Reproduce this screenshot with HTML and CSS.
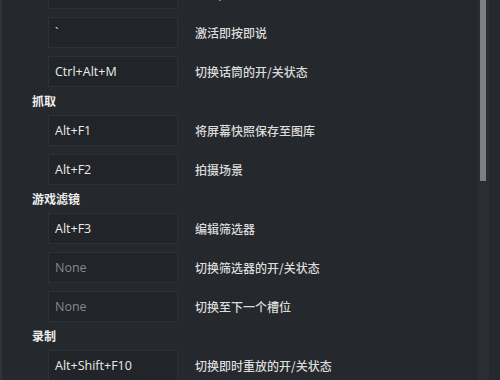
FILE: index.html
```html
<!DOCTYPE html>
<html>
<head>
<meta charset="utf-8">
<link rel="stylesheet" href="styles.css">
</head>
<body>
<div class="frame">
  <div class="content">
    <div class="list">
      <div class="row"><div class="key">Alt+Z</div><div class="desc">打开/关闭游戏内覆盖</div></div>
      <div class="row"><div class="key">`</div><div class="desc">激活即按即说</div></div>
      <div class="row"><div class="key">Ctrl+Alt+M</div><div class="desc">切换话筒的开/关状态</div></div>
      <div class="section">抓取</div>
      <div class="row"><div class="key">Alt+F1</div><div class="desc">将屏幕快照保存至图库</div></div>
      <div class="row"><div class="key">Alt+F2</div><div class="desc">拍摄场景</div></div>
      <div class="section">游戏滤镜</div>
      <div class="row"><div class="key">Alt+F3</div><div class="desc">编辑筛选器</div></div>
      <div class="row"><div class="key none">None</div><div class="desc">切换筛选器的开/关状态</div></div>
      <div class="row"><div class="key none">None</div><div class="desc">切换至下一个槽位</div></div>
      <div class="section">录制</div>
      <div class="row"><div class="key">Alt+Shift+F10</div><div class="desc">切换即时重放的开/关状态</div></div>
      <div class="row"><div class="key">Alt+F10</div><div class="desc">保存最后 5 分钟的录制内容</div></div>
    </div>
  </div>
  <div class="scrollbar"><div class="thumb"></div></div>
</div>
</body>
</html>
```
FILE: styles.css
```css
html, body {
  margin: 0;
  padding: 0;
  width: 500px;
  height: 380px;
  overflow: hidden;
  background: #25292d;
}
.frame {
  display: flex;
  height: 380px;
  border-left: 2px solid #303438;
  box-sizing: border-box;
}
.content {
  flex: 1;
  overflow: hidden;
}
.list {
  display: flex;
  flex-direction: column;
  gap: 8px;
  margin-top: -22px;
  padding-left: 46px;
}
.row {
  display: flex;
  align-items: center;
  height: 31px;
}
.key {
  box-sizing: border-box;
  width: 130px;
  height: 31px;
  display: flex;
  align-items: center;
  padding-left: 6px;
  background: #212428;
  border: 1px solid #2d3135;
  color: #ececec;
  font-family: "Open Sans", "Noto Sans", sans-serif;
  font-size: 12.5px;
}
.key.none {
  color: #85898c;
}
.desc {
  margin-left: 17px;
  color: #dcdcdc;
  font-family: "Noto Sans CJK SC", sans-serif;
  font-size: 12px;
  font-weight: 500;
}
.section {
  height: 12px;
  line-height: 12px;
  margin-left: -16px;
  color: #eeeeee;
  font-family: "Noto Sans CJK SC", sans-serif;
  font-size: 12px;
  font-weight: 700;
}
.scrollbar {
  width: 12px;
  margin-right: 10px;
  background: #2a2e32;
  border-left: 1px solid #23272b;
  border-right: 1px solid #23272b;
  display: flex;
  justify-content: center;
}
.thumb {
  width: 6px;
  height: 181px;
  background: #7c8084;
}
```
